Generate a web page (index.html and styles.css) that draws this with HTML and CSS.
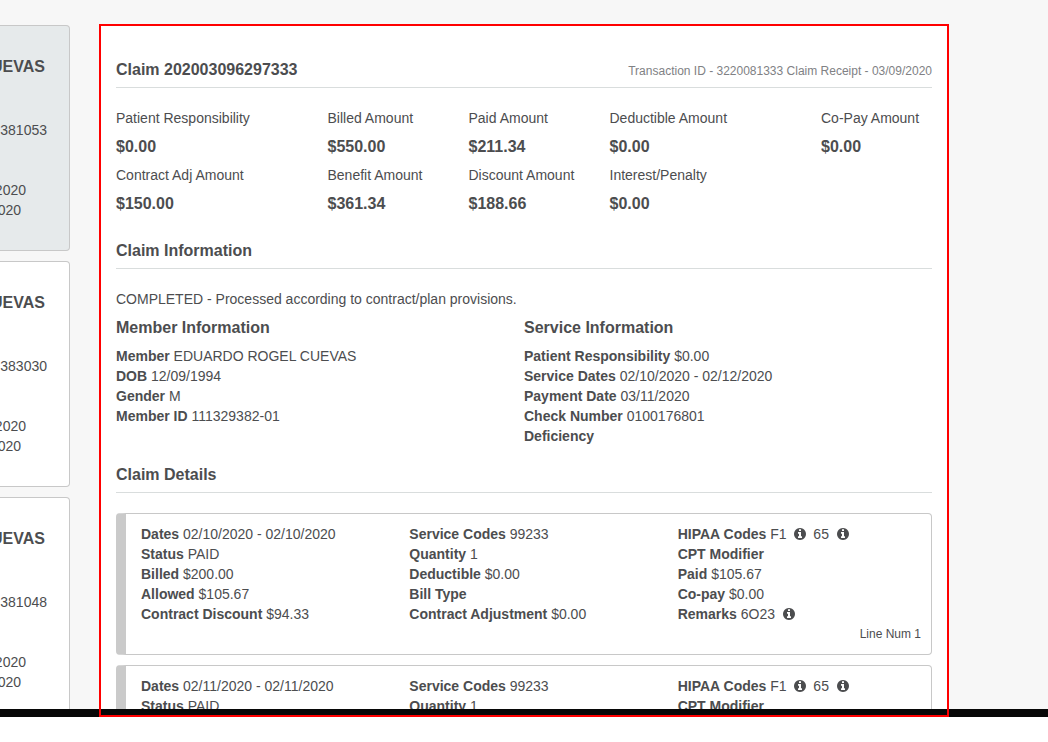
FILE: index.html
```html
<!DOCTYPE html>
<html lang="en">
<head>
<meta charset="utf-8">
<title>Claim 202003096297333</title>
<meta name="viewport" content="width=device-width, initial-scale=1">
<link rel="stylesheet" href="styles.css">
</head>
<body>
<svg class="sprite" aria-hidden="true">
  <symbol id="info" viewBox="0 128 1536 1536">
    <path d="M1024 1376v-160q0-14-9-23t-23-9h-96v-512q0-14-9-23t-23-9h-320q-14 0-23 9t-9 23v160q0 14 9 23t23 9h96v320h-96q-14 0-23 9t-9 23v160q0 14 9 23t23 9h448q14 0 23-9t9-23zm-128-896v-160q0-14-9-23t-23-9h-192q-14 0-23 9t-9 23v160q0 14 9 23t23 9h192q14 0 23-9t9-23zm640 416q0 209-103 385.500t-279.500 279.500-385.500 103-385.500-103-279.500-279.500-103-385.500 103-385.500 279.500-279.500 385.500-103 385.500 103 279.500 279.500 103 385.500z"/>
  </symbol>
</svg>
<div class="screen">
  <div class="view">
    <aside class="claims">
      <article class="claim-card claim-card-active">
        <h3 class="claim-name">UEVAS</h3>
        <p class="claim-number">381053</p>
        <p class="claim-from">2020</p>
        <p class="claim-to">020</p>
      </article>
      <article class="claim-card">
        <h3 class="claim-name">UEVAS</h3>
        <p class="claim-number">383030</p>
        <p class="claim-from">2020</p>
        <p class="claim-to">020</p>
      </article>
      <article class="claim-card">
        <h3 class="claim-name">UEVAS</h3>
        <p class="claim-number">381048</p>
        <p class="claim-from">2020</p>
        <p class="claim-to">020</p>
      </article>
    </aside>
    <main class="panel">
      <header class="section-head">
        <h1 class="title">Claim 202003096297333</h1>
        <p class="meta"><span>Transaction ID - 3220081333</span> <span>Claim Receipt - 03/09/2020</span></p>
      </header>
      <dl class="amounts">
        <div class="amount"><dt>Patient Responsibility</dt><dd>$0.00</dd></div>
        <div class="amount"><dt>Billed Amount</dt><dd>$550.00</dd></div>
        <div class="amount"><dt>Paid Amount</dt><dd>$211.34</dd></div>
        <div class="amount"><dt>Deductible Amount</dt><dd>$0.00</dd></div>
        <div class="amount"><dt>Co-Pay Amount</dt><dd>$0.00</dd></div>
        <div class="amount"><dt>Contract Adj Amount</dt><dd>$150.00</dd></div>
        <div class="amount"><dt>Benefit Amount</dt><dd>$361.34</dd></div>
        <div class="amount"><dt>Discount Amount</dt><dd>$188.66</dd></div>
        <div class="amount"><dt>Interest/Penalty</dt><dd>$0.00</dd></div>
      </dl>

      <header class="section-head"><h2 class="title">Claim Information</h2></header>
      <p class="status">COMPLETED - Processed according to contract/plan provisions.</p>
      <div class="info">
        <section>
          <h3 class="title info-title">Member Information</h3>
          <dl class="facts">
            <div><dt>Member</dt> <dd>EDUARDO ROGEL CUEVAS</dd></div>
            <div><dt>DOB</dt> <dd>12/09/1994</dd></div>
            <div><dt>Gender</dt> <dd>M</dd></div>
            <div><dt>Member ID</dt> <dd>111329382-01</dd></div>
          </dl>
        </section>
        <section>
          <h3 class="title info-title">Service Information</h3>
          <dl class="facts">
            <div><dt>Patient Responsibility</dt> <dd>$0.00</dd></div>
            <div><dt>Service Dates</dt> <dd>02/10/2020 - 02/12/2020</dd></div>
            <div><dt>Payment Date</dt> <dd>03/11/2020</dd></div>
            <div><dt>Check Number</dt> <dd>0100176801</dd></div>
            <div><dt>Deficiency</dt> <dd></dd></div>
          </dl>
        </section>
      </div>

      <header class="section-head"><h2 class="title">Claim Details</h2></header>
      <div class="lines">
        <article class="line">
          <div class="line-columns">
            <dl class="facts">
              <div><dt>Dates</dt> <dd>02/10/2020 - 02/10/2020</dd></div>
              <div><dt>Status</dt> <dd>PAID</dd></div>
              <div><dt>Billed</dt> <dd>$200.00</dd></div>
              <div><dt>Allowed</dt> <dd>$105.67</dd></div>
              <div><dt>Contract Discount</dt> <dd>$94.33</dd></div>
            </dl>
            <dl class="facts">
              <div><dt>Service Codes</dt> <dd>99233</dd></div>
              <div><dt>Quantity</dt> <dd>1</dd></div>
              <div><dt>Deductible</dt> <dd>$0.00</dd></div>
              <div><dt>Bill Type</dt> <dd></dd></div>
              <div><dt>Contract Adjustment</dt> <dd>$0.00</dd></div>
            </dl>
            <dl class="facts">
              <div><dt>HIPAA Codes</dt> <dd>F1 <svg class="icon"><use href="#info"/></svg> 65 <svg class="icon"><use href="#info"/></svg></dd></div>
              <div><dt>CPT Modifier</dt> <dd></dd></div>
              <div><dt>Paid</dt> <dd>$105.67</dd></div>
              <div><dt>Co-pay</dt> <dd>$0.00</dd></div>
              <div><dt>Remarks</dt> <dd>6O23 <svg class="icon"><use href="#info"/></svg></dd></div>
            </dl>
          </div>
          <p class="line-number">Line Num 1</p>
        </article>
        <article class="line">
          <div class="line-columns">
            <dl class="facts">
              <div><dt>Dates</dt> <dd>02/11/2020 - 02/11/2020</dd></div>
              <div><dt>Status</dt> <dd>PAID</dd></div>
            </dl>
            <dl class="facts">
              <div><dt>Service Codes</dt> <dd>99233</dd></div>
              <div><dt>Quantity</dt> <dd>1</dd></div>
            </dl>
            <dl class="facts">
              <div><dt>HIPAA Codes</dt> <dd>F1 <svg class="icon"><use href="#info"/></svg> 65 <svg class="icon"><use href="#info"/></svg></dd></div>
              <div><dt>CPT Modifier</dt> <dd></dd></div>
            </dl>
          </div>
        </article>
      </div>
    </main>
  </div>
  <div class="bar"></div>
  <div class="highlight"></div>
</div>
</body>
</html>
```

FILE: styles.css
```css
* {
  box-sizing: border-box;
}

body {
  height: 100vh;
  margin: 0;
  padding-bottom: 25px;
  overflow: hidden;
  background: #fff;
  color: #4c4d4f;
  font: 14px/20px "Liberation Sans", Arial, sans-serif;
}

h1, h2, h3, p, dl, dd {
  margin: 0;
}

.sprite {
  display: none;
}

.screen {
  position: relative;
  display: flex;
  flex-direction: column;
  height: 100%;
}

.view {
  flex: 1;
  min-height: 0;
  display: flex;
  align-items: flex-start;
  gap: 31px;
  padding: 25px 101px 0 0;
  overflow: hidden;
  background: #f7f7f7;
}

.bar {
  flex: none;
  height: 8px;
  background: #070707;
}

/* Red outline over the detail panel */
.highlight {
  position: absolute;
  inset: 24px 99px 0;
  border: 2px solid #f00;
  pointer-events: none;
}

/* Claim list, scrolled past its left edge */
.claims {
  flex: none;
  width: 70px;
  display: flex;
  flex-direction: column;
  gap: 10px;
}

.claim-card {
  display: flex;
  flex-direction: column;
  align-items: flex-end;
  padding: 31px 0 30px;
  border: 1px solid #c8c8c8;
  border-left: 0;
  border-radius: 0 4px 4px 0;
  background: #fff;
}

.claim-card-active {
  background: #e6eaeb;
}

.claim-name {
  margin-bottom: 43px;
  padding-right: 24px;
  font-size: 16px;
}

.claim-number {
  margin-bottom: 40px;
  padding-right: 22px;
}

.claim-from {
  padding-right: 43px;
}

.claim-to {
  padding-right: 48px;
}

.panel {
  flex: 1;
  min-width: 0;
  padding: 36px 15px 15px;
  background: #fff;
}

.section-head {
  display: flex;
  justify-content: space-between;
  align-items: baseline;
  margin-bottom: 20px;
  padding-bottom: 8px;
  border-bottom: 1px solid #d9dddd;
}

.title {
  font-size: 16px;
  line-height: 18px;
}

.meta {
  color: #808184;
  font-size: 12px;
  line-height: 14px;
}

.amounts {
  display: grid;
  grid-template-columns: 3fr 2fr 2fr 3fr 2fr;
  margin: 0 -15px 20px;
}

.amount {
  padding-left: 15px;
}

.amount dd {
  margin: 10px 0;
  font-size: 16px;
  font-weight: bold;
  line-height: 17px;
}

.info {
  display: grid;
  grid-template-columns: 1fr 1fr;
  margin: 10px 0 20px;
}

.info-title {
  margin-bottom: 9px;
}

.facts dt,
.facts dd {
  display: inline;
}

.facts dt {
  font-weight: bold;
}

.icon {
  width: 12px;
  height: 12px;
  margin: 0 3px 0 4px;
  vertical-align: -1px;
  fill: currentColor;
}

.lines {
  display: flex;
  flex-direction: column;
  gap: 10px;
}

.line {
  padding: 10px 0;
  border: 1px solid #c8c8c8;
  border-left: 10px solid #cacaca;
  border-radius: 4px;
}

.line-columns {
  display: grid;
  grid-template-columns: repeat(3, 1fr);
}

.line-columns .facts {
  padding-left: 15px;
}

.line-number {
  padding-right: 10px;
  font-size: 12px;
  text-align: right;
}
```
